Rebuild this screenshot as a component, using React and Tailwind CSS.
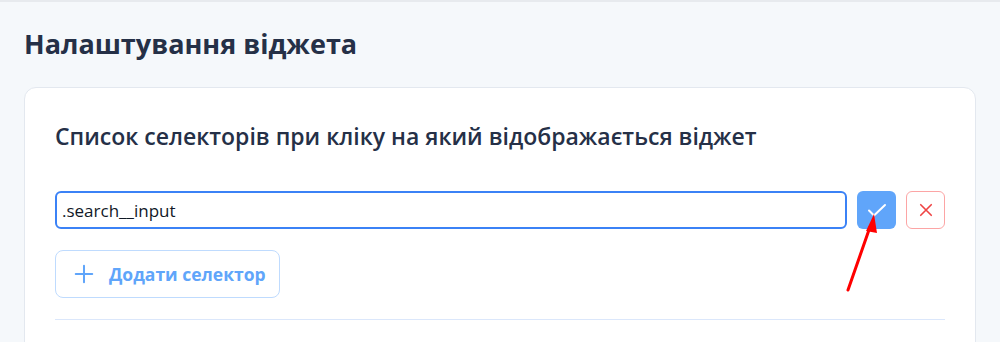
import { useState } from "react";

export default function App() {
    const [selector, setSelector] = useState(".search__input");

    return (
        <div className="relative w-[1000px] h-[342px] overflow-hidden bg-[#f5f8fb] border-t-2 border-[#e7eaee]" style={{fontFamily: '"Open Sans", "Noto Sans", sans-serif'}}>
            <div className="pl-[24px] pr-[24px]">
                <h1 className="pt-[25px] text-[27px] leading-[34px] font-bold text-[#253047]">Налаштування віджета</h1>

                <div className="mt-[26px] bg-white border border-[#e3e8ef] rounded-[12px] px-[30px] pt-[33px] pb-[40px]">
                    <h2 className="text-[23px] leading-[30px] font-semibold text-[#253047]">
                        Список селекторів при кліку на який відображається віджет
                    </h2>

                    <div className="mt-[40px] flex items-center gap-[10px]">
                        <input
                            value={selector}
                            onChange={(e) => setSelector(e.target.value)}
                            className="flex-1 h-[38px] px-[5px] border-2 border-[#3b82f6] rounded-[6px] text-[17px] text-[#111827] outline-none"
                        />
                        <button className="w-[39px] h-[38px] shrink-0 rounded-[6px] bg-[#60a5fa] flex items-center justify-center">
                            <svg width="22" height="22" viewBox="0 0 22 22" fill="none" stroke="white" strokeWidth="2" strokeLinecap="round" strokeLinejoin="round">
                                <path d="M3 11.5l5 5L19 6" />
                            </svg>
                        </button>
                        <button className="w-[39px] h-[38px] shrink-0 rounded-[6px] border border-[#fca5a5] bg-white flex items-center justify-center">
                            <svg width="18" height="18" viewBox="0 0 24 24" fill="none" stroke="#ef4444" strokeWidth="2.2" strokeLinecap="round">
                                <path d="M5 5l14 14M19 5L5 19" />
                            </svg>
                        </button>
                    </div>

                    <button className="mt-[21px] h-[48px] pl-[17px] pr-[13px] flex items-center gap-[14px] border border-[#bfdbfe] rounded-[8px] bg-white text-[#60a5fa]">
                        <svg width="22" height="22" viewBox="0 0 24 24" fill="none" stroke="#60a5fa" strokeWidth="2.2" strokeLinecap="round">
                            <path d="M12 3v18M3 12h18" />
                        </svg>
                        <span className="text-[17.5px] font-bold">Додати селектор</span>
                    </button>

                    <div className="mt-[21px] h-px bg-[#dbe7fb]" />
                </div>
            </div>

            {/* red annotation arrow */}
            <svg className="absolute left-[838px] top-[205px]" width="50" height="95" viewBox="0 0 50 95">
                <line x1="10" y1="83" x2="32" y2="20" stroke="#ff0000" strokeWidth="3" strokeLinecap="round" />
                <polygon points="36,7 28,24 39,26" fill="#ff0000" />
            </svg>
        </div>
    );
}
